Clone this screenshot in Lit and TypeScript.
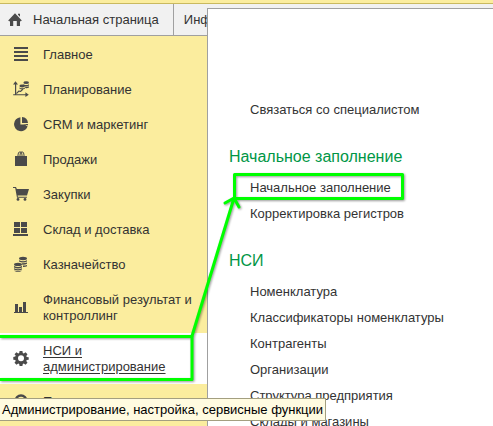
import { LitElement, html, css, svg } from "lit";
import { customElement } from "lit/decorators.js";

const icons: Record<string, unknown> = {
  home: svg`<path d="M8 1.2 14.8 8.4 13.6 9.4 13 8.8V14H9.8V9H6.2v5H3V8.8l-.6.6-1.2-1zM11 1.8h2v3l-2-2z"/>`,
  lines: svg`<path d="M1 1h14v2H1zM1 5h14v2H1zM1 9h14v2H1zM1 13h14v2H1z"/>`,
  plan: svg`<path d="M0 3.4 2.5.2 5 3.4H3.2v9.8h9.2v-1.9l3.4 2.4-3.4 2.3v-1.8H.2v-1H2V3.4zM3 12.2l2.6-2.6 1.8.2 2-2 .8.9-2.4 2.2-1.8-.2L4 12.7z"/>
    <ellipse cx="9.2" cy="5" rx="2.8" ry="1.4"/><path d="M6.4 6.4q2.8 1.8 5.6 0v1.2q-2.8 2-5.6 0z"/>
    <ellipse cx="13.2" cy="1.7" rx="2.8" ry="1.4"/><path d="M10.4 3.2q2.8 1.8 5.6 0v1.2q-2.8 1.8-5.6 0zM12.2 5.6q2 .5 3.8-.4v1.3q-1.6 1-3.8.6z"/>`,
  pie: svg`<path d="M7.4 1.2V8.4h4.2l3 2.2A7 7 0 1 1 7.4 1.2z"/><path d="M9 1a6.6 6.6 0 0 1 6 5.9H9z"/><path d="M10.4 8h4.6l-.2 1.6z"/>`,
  bag: svg`<path d="M2 5h12v10H2z"/><path d="M5 6.6V4q0-3.2 2-3.2T9 4v1M7 5V4q0-3.2 2-3.2T11 4v2.6" fill="none" stroke="currentColor"/>`,
  cart: svg`<path d="M0 1h3l.8 2H16l-2 6.6H4.6l.3 1.2h9v1H4L2.2 2H0z"/><circle cx="5" cy="13.4" r="1.4"/><circle cx="12" cy="13.4" r="1.4"/>`,
  boxes: svg`<path d="M1 1h6v5H1zM8 1h6v5H8zM1 7h6v5H1zM8 7h6v5H8zM0 13h15v2H0z"/>`,
  coins: svg`<ellipse cx="10" cy="2.5" rx="4" ry="1.7"/><path d="M6 4.2q4 2 8 0v1.3q-4 2-8 0zM9 7.2q3 .2 5-.8v1.4q-2 1-5 .8zM10 9.6q2.4.1 4-.7v1.3q-1.6.8-4 .7z"/>
    <ellipse cx="5" cy="8.4" rx="4" ry="1.7"/><path d="M1 10.1q4 2 8 0v1.3q-4 2-8 0zM1 12.3q4 2 8 0v1.3q-4 2-8 0zM1.5 14.4q3.5 1.6 7 0v.6q-3.5 2-7 0z"/>`,
  bars: svg`<path d="M2 5h3v8H2zM6 8h3v5H6zM10 3h3v10h-3zM1 13h14v1H1z"/>`,
  gear: svg`<path fill-rule="evenodd" d="M6.6 1h2.8l.4 2 1 .4 1.7-1.2 2 2-1.2 1.7.4 1 2 .4v2.4l-2 .4-.4 1 1.2 1.7-2 2-1.7-1.2-1 .4-.4 2H6.6l-.4-2-1-.4-1.7 1.2-2-2 1.2-1.7-.4-1-2-.4V6.9l2-.4.4-1L1.5 4.2l2-2 1.7 1.2 1-.4zM8 5.2a3 3 0 1 0 0 6 3 3 0 1 0 0-6z"/>`,
  ring: svg`<circle cx="8" cy="8" r="5.5" fill="none" stroke="currentColor" stroke-width="2.4"/><circle cx="8" cy="8" r="2"/>`,
};

const icon = (name: string) =>
  html`<svg class="icon" viewBox="0 0 16 16" aria-hidden="true">${icons[name]}</svg>`;

const sections: [string, string][] = [
  ["lines", "Главное"],
  ["plan", "Планирование"],
  ["pie", "CRM и маркетинг"],
  ["bag", "Продажи"],
  ["cart", "Закупки"],
  ["boxes", "Склад и доставка"],
  ["coins", "Казначейство"],
  ["bars", "Финансовый результат и контроллинг"],
  ["gear", "НСИ и администрирование"],
  ["ring", "Производство"],
];

const groups: { title?: string; links: string[] }[] = [
  { links: ["Связаться со специалистом"] },
  { title: "Начальное заполнение", links: ["Начальное заполнение", "Корректировка регистров"] },
  {
    title: "НСИ",
    links: [
      "Номенклатура",
      "Классификаторы номенклатуры",
      "Контрагенты",
      "Организации",
      "Структура предприятия",
      "Склады и магазины",
    ],
  },
];

@customElement("app-root")
export class AppRoot extends LitElement {
  static styles = css`
    :host {
      display: flex;
      flex-direction: column;
      position: relative;
      height: 100vh;
      overflow: hidden;
      background: #fff;
      color: #333;
      font: 13px/16px "Liberation Sans", Arial, sans-serif;
    }
    a {
      color: inherit;
      text-decoration: none;
    }
    .icon {
      flex: none;
      width: 16px;
      height: 16px;
      fill: currentColor;
      color: #4a4a4a;
    }
    .tabs {
      display: flex;
      flex: none;
      height: 31px;
      padding-top: 1px;
      background: #f1f1f1;
      border-top: 3px solid #fbed9e;
      border-bottom: 1px solid #a0a0a0;
      box-shadow: inset 0 1px #c9b95f;
    }
    .tab {
      display: flex;
      align-items: center;
      gap: 10px;
      padding: 0 14px 0 10px;
      border: 0;
      border-right: 1px solid #a0a0a0;
      background: none;
      color: inherit;
      font: inherit;
      white-space: nowrap;
    }
    .tab:first-child {
      padding-left: 7px;
    }
    .tab:last-child {
      border-right: 0;
    }
    .sections {
      flex: 1;
      width: 207px;
      padding-top: 1px;
      box-sizing: border-box;
      background: #fbed9e;
    }
    .section {
      display: flex;
      align-items: center;
      gap: 14px;
      padding: 9px 12px 9px 13px;
    }
    .section .icon {
      margin-bottom: 1px;
    }
    .label {
      padding-top: 1px;
    }
    .active {
      background: #fff;
      text-decoration: underline;
      text-underline-offset: 2px;
    }
    .panel {
      position: absolute;
      inset: 8px 0 0 207px;
      overflow: hidden;
      box-sizing: border-box;
      padding: 88px 0 0 21px;
      border-top: 1px solid #a0a0a0;
      border-left: 1px solid #a0a0a0;
      background: #fff;
    }
    .title {
      margin: 24px 0 8px;
      color: #009646;
      font-size: 16px;
      font-weight: 400;
      line-height: 20px;
    }
    .link {
      display: block;
      padding-left: 21px;
      line-height: 26px;
      white-space: nowrap;
    }
    .tooltip {
      position: absolute;
      left: 0;
      top: 398px;
      padding: 3px 2px 2px;
      border: 1px solid #a39f80;
      border-left: 0;
      background: #fffbe0;
      color: #000;
      white-space: nowrap;
    }
    .marks {
      position: absolute;
      left: 0;
      top: 0;
      width: 410px;
      height: 390px;
      fill: none;
      stroke: #0f0;
      stroke-width: 3;
      stroke-linejoin: round;
      stroke-linecap: round;
      filter: drop-shadow(1px 1px 1px #0006);
      pointer-events: none;
    }
  `;

  render() {
    return html`
      <header class="tabs">
        <button class="tab">${icon("home")}<span>Начальная страница</span></button>
        <button class="tab">Информация</button>
      </header>
      <nav class="sections">
        ${sections.map(
          ([name, label]) => html`
            <a class="section ${name === "gear" ? "active" : ""}" href="#">
              ${icon(name)}<span class="label">${label}</span>
            </a>
          `,
        )}
      </nav>
      <main class="panel">
        ${groups.map(
          (group) => html`
            <section>
              ${group.title ? html`<h2 class="title">${group.title}</h2>` : ""}
              ${group.links.map((link) => html`<a class="link" href="#">${link}</a>`)}
            </section>
          `,
        )}
      </main>
      <svg class="marks" viewBox="0 0 410 390" aria-hidden="true">
        <rect x="-2" y="336.5" width="194" height="43" />
        <rect x="234.5" y="174.5" width="168" height="24" />
        <path d="M192 336 234 198M225 203l9-5 5 9" />
      </svg>
      <div class="tooltip" role="tooltip">Администрирование, настройка, сервисные функции</div>
    `;
  }
}
